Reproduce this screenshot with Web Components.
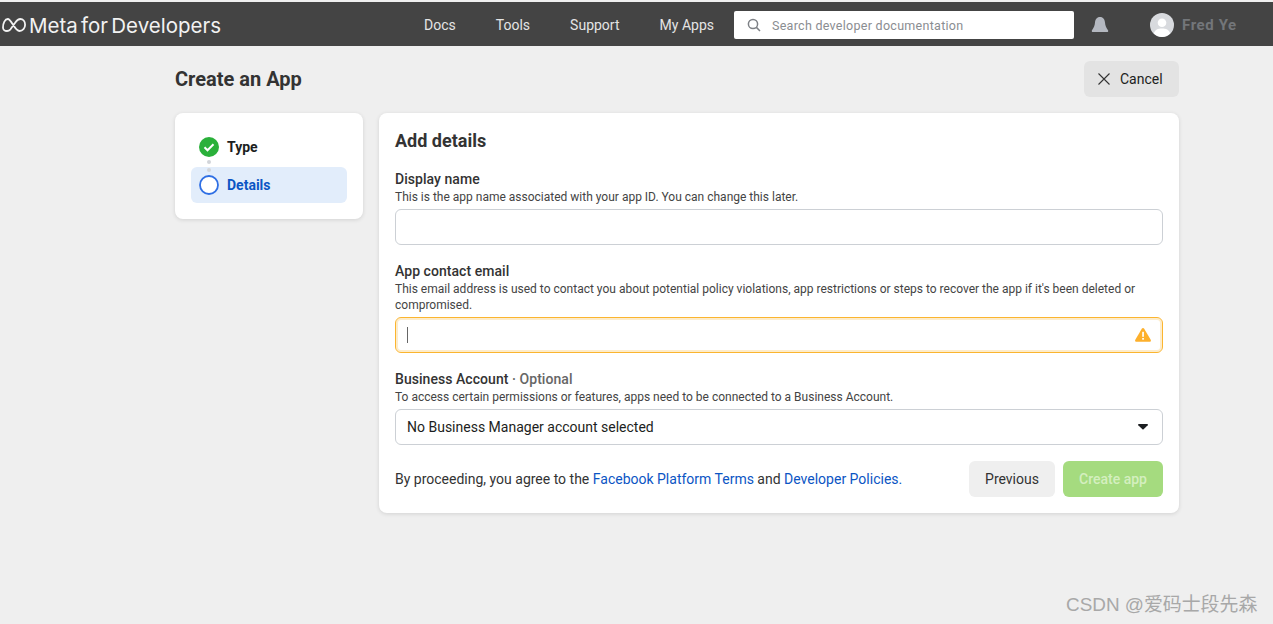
<!DOCTYPE html>
<html lang="en"><head><meta charset="utf-8"><title>Create an App</title>
<style>
html,body{margin:0;height:100%;background:#efefef;font-family:Roboto,"Liberation Sans",sans-serif;color:#333;overflow:hidden}
body{position:relative;height:624px}
</style></head><body>
<top-nav></top-nav>
<create-page></create-page>
<water-mark>CSDN @爱码士段先森</water-mark>
<script>
const def=(n,html)=>customElements.define(n,class extends HTMLElement{constructor(){super();this.attachShadow({mode:'open'}).innerHTML=html}});
def('top-nav',`<style>
:host{display:flex;align-items:center;height:42px;padding-top:2px;margin-top:2px;background:#444;color:#e4e4e4;font-size:14px;box-sizing:content-box}
.logo{width:424px;flex:none;display:flex;align-items:center;gap:3px;padding-left:2px;box-sizing:border-box;color:#f2f2f2;font:400 20.5px Inter,Roboto,sans-serif;letter-spacing:0;word-spacing:-2.500px}
.logo svg{flex:none}
nav{display:flex;justify-content:space-between;width:290px}
.search{margin-left:20px;width:340px;height:28px;background:#fff;border-radius:2px;display:flex;align-items:center;gap:11px;padding-left:13px;box-sizing:border-box;color:#8a8d91;font-size:12.500px;letter-spacing:.28px}
.bell{margin-left:16px;display:flex}
.avatar{margin-left:40px;display:flex}
.name{margin-left:8px;color:#73767a;font-weight:700;font-size:15px;letter-spacing:.6px}
</style>
<div class="logo"><svg width="24" height="14" viewBox="0 0 24 14" fill="none" stroke="#f2f2f2" stroke-width="1.800"><path d="M1 9.500C1 5 3 1 5.800 1c3.700 0 6.700 12 11.700 12 3.200 0 5.600-2.800 5.600-6.200C23.100 3.500 21 1 18.300 1c-2 0-3.500 1.400-5 3.600L8.500 11.300C7.300 12.600 6.200 13 5 13c-2.400 0-4-1.400-4-3.500z"/></svg><span>Meta for Developers</span></div>
<nav><span>Docs</span><span>Tools</span><span>Support</span><span>My Apps</span></nav>
<div class="search"><svg width="14" height="14" viewBox="0 0 14 14" fill="none" stroke="#7d8085" stroke-width="1.500"><circle cx="6" cy="6" r="4.600"/><path d="M9.400 9.400L13 13"/></svg><span>Search developer documentation</span></div>
<span class="bell"><svg width="20" height="18" viewBox="0 0 20 18"><path fill="#b4b8c0" d="M10 1c3.300 0 4.800 2.700 5 5.600.2 3.400 1.400 5.400 3 7.600.5.800.2 1.800-1 1.800H3c-1.200 0-1.500-1-1-1.800 1.600-2.200 2.800-4.200 3-7.600C5.200 3.700 6.700 1 10 1z"/></svg></span>
<span class="avatar"><svg width="24" height="24" viewBox="0 0 24 24"><circle cx="12" cy="12" r="12" fill="#d8dade"/><circle cx="12" cy="9.800" r="4.300" fill="#fff"/><path fill="#fff" d="M3.800 20.500c1-3.700 4.300-5 8.200-5s7.200 1.300 8.200 5A12 12 0 0 1 12 24a12 12 0 0 1-8.200-3.500z"/></svg></span>
<span class="name">Fred Ye</span>`);

def('page-head',`<style>
:host{display:flex;align-items:center;justify-content:space-between;height:36px}
h1{margin:0;font-size:20px;font-weight:700;color:#333;line-height:36px}
button{all:unset;box-sizing:border-box;height:36px;width:95px;background:#e3e3e3;border-radius:6px;display:flex;align-items:center;gap:10px;padding-left:14px;font-size:14px;color:#1c1e21}
svg{flex:none}
</style><h1>Create an App</h1><button><svg width="12" height="12" viewBox="0 0 12 12" stroke="#333" stroke-width="1.100"><path d="M.5.500l11 11M11.500.500l-11 11"/></svg>Cancel</button>`);

def('step-list',`<style>
:host{display:block;width:188px;height:106px;background:#fff;border-radius:8px;box-shadow:0 1px 4px rgba(0,0,0,.12);padding:16px;box-sizing:border-box}
.row{display:flex;align-items:center;gap:8px;height:36px;padding-left:8px;font-size:14px;font-weight:700;color:#1c1e21;border-radius:6px;position:relative}
.on{background:#e2edfb;color:#0b55c4;margin-top:2px}
.dots{position:absolute;left:16px;top:-7px;display:flex;flex-direction:column;gap:4px}
.dots i{width:4px;height:4px;border-radius:50%;background:#d2d5da}
svg{flex:none}
</style><div class="row"><svg width="20" height="20" viewBox="0 0 20 20"><circle cx="10" cy="10" r="10" fill="#2ab03a"/><path d="M5.500 10.300l3 3 6-6" fill="none" stroke="#fff" stroke-width="2"/></svg>Type</div>
<div class="row on"><span class="dots"><i></i><i></i></span><svg width="20" height="20" viewBox="0 0 20 20"><circle cx="10" cy="10" r="9" fill="#fff" stroke="#2f6fe4" stroke-width="1.800"/></svg>Details</div>`);

def('form-field',`<style>
:host{display:block;margin-bottom:17px}
.l{font-size:14px;font-weight:500;line-height:18px;color:#333;letter-spacing:.05px}
.d{font-size:12px;line-height:16px;color:#444;margin-bottom:4px;margin-top:1px}
</style><div class="l"><slot name="label"></slot></div><div class="d"><slot name="help"></slot></div><slot></slot>`);

def('text-box',`<style>
:host{display:flex;align-items:center;justify-content:space-between;height:36px;box-sizing:border-box;border:1px solid #ccd0d5;border-radius:6px;padding:0 11px;font-size:14px;color:#1c1e21;background:#fff}
:host([warn]){border-color:#fbb52f;box-shadow:inset 0 0 0 2px #fdeccb}
</style><slot></slot>`);

def('create-page',`<style>
:host{display:block;width:1004px;margin:15px 0 0 175px}
.cols{display:flex;gap:16px;align-items:flex-start;margin-top:16px}
.main{flex:1;height:400px;background:#fff;border-radius:8px;box-shadow:0 1px 4px rgba(0,0,0,.12);padding:16px;box-sizing:border-box}
h2{margin:1px 0 18px;font-size:18px;font-weight:700;color:#333;line-height:22px}
.caret{width:1px;height:16px;background:#666}
.warn{flex:none}
.drop{flex:none;margin-right:3px}
.foot{display:flex;align-items:center;font-size:14px;color:#333;height:36px;margin-top:-1px}
.foot a{color:#0b55c4;text-decoration:none}
.txt{flex:1}
.b{height:36px;border-radius:6px;display:flex;align-items:center;justify-content:center;font-size:14px}
.prev{width:86px;background:#efefef;color:#333;margin-right:8px}
.go{width:100px;background:#a5db7f;color:#d4efbf;font-weight:500}
.opt{color:#666}
</style>
<page-head></page-head>
<div class="cols"><step-list></step-list>
<div class="main"><h2>Add details</h2>
<form-field><span slot="label">Display name</span><span slot="help">This is the app name associated with your app ID. You can change this later.</span><text-box></text-box></form-field>
<form-field><span slot="label">App contact email</span><span slot="help">This email address is used to contact you about potential policy violations, app restrictions or steps to recover the app if it's been deleted or compromised.</span><text-box warn><span class="caret"></span><svg class="warn" width="16" height="14" viewBox="0 0 16 14"><path fill="#fdb02c" d="M8 0c.5 0 .9.300 1.200.8l6.500 11c.5.900 0 2-1 2H1.300c-1 0-1.500-1.100-1-2L6.800.8C7.100.300 7.500 0 8 0z"/><rect x="7.200" y="3.800" width="1.700" height="5" fill="#fff"/><rect x="7.200" y="10" width="1.700" height="1.700" fill="#fff"/></svg></text-box></form-field>
<form-field><span slot="label">Business Account <span class="opt">· Optional</span></span><span slot="help">To access certain permissions or features, apps need to be connected to a Business Account.</span><text-box><span>No Business Manager account selected</span><svg class="drop" width="10" height="6" viewBox="0 0 12 8" preserveAspectRatio="none"><path fill="#1c1e21" d="M1 0h10c.8 0 1.200.9.700 1.500L6.700 7c-.4.400-1 .4-1.400 0L.3 1.500C-.2.900.2 0 1 0z"/></svg></text-box></form-field>
<div class="foot"><span class="txt">By proceeding, you agree to the <a>Facebook Platform Terms</a> and <a>Developer Policies.</a></span><span class="b prev">Previous</span><span class="b go">Create app</span></div>
</div></div>`);

def('water-mark',`<style>
:host{position:absolute;left:1066px;top:593px;font:18.900px/24px "Liberation Sans","Noto Sans CJK SC",sans-serif;color:#a8a8a8;white-space:nowrap}
</style><slot></slot>`);
</script>
</body></html>
